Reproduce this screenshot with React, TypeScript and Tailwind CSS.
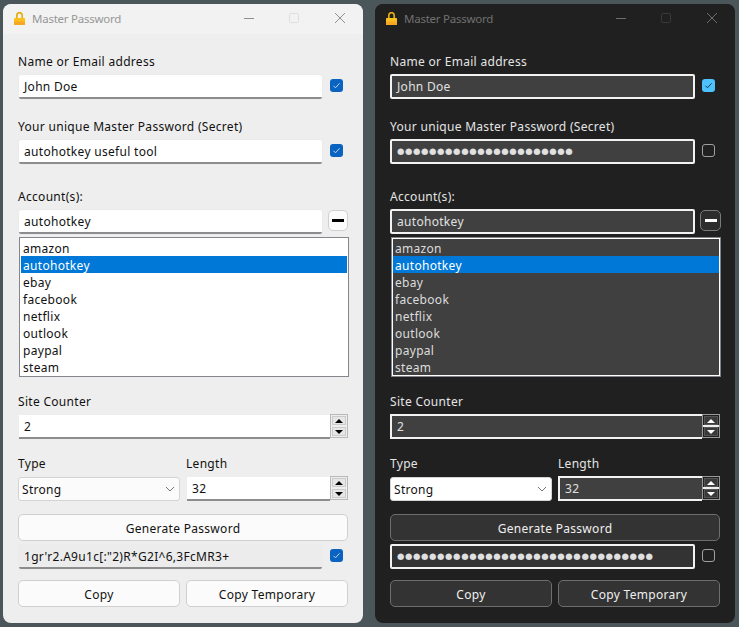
import React from "react";

type Theme = {
  win: string; bar: string; title: string; ctl: string; ctlBox: string; label: string; input: string; outInput: string;
  chkOn: string; tick: string; chkOff: string; minus: string; minusBar: string; list: string; item: string;
  combo: string; btn: string; spinOuter: string; spinBtn: string; spinSep: string; arrow: string; spinInput: string;
};

const light: Theme = {
  win: "bg-[#eeeeee]", bar: "bg-[#f2f2f2]", title: "text-[#969696]", ctl: "#8f8f8f", ctlBox: "#dedede", label: "text-[#111111]",
  input: "h-[24px] pl-[5px] bg-white text-[#111111] border-b-2 border-b-[#8d8d8d] rounded-[2px] shadow-[0_0_1px_#d8d8d8]",
  outInput: "h-[24px] pl-[5px] bg-[#ececec] text-[#111111] border-b-2 border-b-[#8d8d8d] rounded-[2px] shadow-[0_0_1px_#d8d8d8]",
  chkOn: "bg-[#0a63c0]", tick: "#bcd6f2", chkOff: "border border-[#999999]",
  minus: "ml-[6px] w-[20px] bg-[#fbfbfb] border border-[#d0d0d0]", minusBar: "bg-black",
  list: "bg-white border border-[#85858b] p-px", item: "text-[#111111]",
  combo: "bg-[#fbfbfb] text-[#111111] border border-[#d4d4d4]",
  btn: "bg-[#fbfbfb] text-[#111111] border border-[#cfcfcf]",
  spinOuter: "border border-[#b9b9b9] bg-[#eeeeee]", spinBtn: "bg-[#e6e6e6] border border-[#cbcbcb]", spinSep: "h-[2px]", arrow: "border-t-black border-b-black",
  spinInput: "ml-px pl-[5px] bg-white text-[#111111] border-b-2 border-b-[#8d8d8d]",
};

const dark: Theme = {
  win: "bg-[#202020]", bar: "bg-[#202020]", title: "text-[#707070]", ctl: "#6e6e6e", ctlBox: "#3a3a3a", label: "text-[#e4e4e4]",
  input: "h-[25px] -mt-px -mx-px pl-[5px] pb-[1px] bg-[#404040] text-[#e0e0e0] border-2 border-[#f2f2f2] rounded-[2px]",
  outInput: "h-[25px] -mt-px -mx-px pl-[5px] pb-[1px] bg-[#333333] text-[#e0e0e0] border-2 border-[#f2f2f2] rounded-[2px]",
  chkOn: "bg-[#4cc2ff]", tick: "#1b3a4a", chkOff: "border border-[#a0a0a0]",
  minus: "ml-[6px] -mr-px w-[21px] bg-[#2d2d2d] border border-[#7a7a7a]", minusBar: "bg-white",
  list: "bg-[#404040] border border-[#808488] outline outline-1 -outline-offset-2 outline-white p-px", item: "text-[#dcdcdc]",
  combo: "bg-white text-[#111111] border border-[#d4d4d4]",
  btn: "bg-[#333333] text-[#f0f0f0] border border-[#6e6e6e]",
  spinOuter: "border border-[#9a9a9a] bg-[#202020]", spinBtn: "bg-[#3a3a3a] border border-[#555555]", spinSep: "h-[2px] -mx-px bg-[#eeeeee]", arrow: "border-t-white border-b-white",
  spinInput: "-mt-px pl-[5px] bg-[#404040] text-[#e0e0e0] border-2 border-r-0 border-[#f2f2f2]",
};

const font = "font-['Noto_Sans',sans-serif] text-[12px] tracking-[0.3px] leading-[17px]";

function Lock() {
  return (
    <svg width="11" height="13" viewBox="0 0 11 13" className="shrink-0">
      <path d="M2.8 6.5V3.4a2.7 2.7 0 0 1 5.4 0v3.1" fill="none" stroke="#e3ab12" strokeWidth="1.7" />
      <rect x="0" y="6" width="11" height="7" rx="0.8" fill="#fcc01e" />
      <rect x="0" y="9.5" width="11" height="3.5" rx="0.8" fill="#f6a823" />
    </svg>
  );
}

function TitleBar({ t }: { t: Theme }) {
  return (
    <div className={`flex h-[30px] items-center rounded-t-lg pb-[2px] pl-[11px] ${t.bar}`}>
      <Lock />
      <span className={`ml-[7px] text-[11.5px] tracking-[-0.25px] ${t.title}`}>Master Password</span>
      <div className="ml-auto flex items-center">
        <svg width="10" height="10" viewBox="0 0 10 10" className="mr-[35px]"><path d="M0 5.5h10" stroke={t.ctl} strokeWidth="1" /></svg>
        <svg width="10" height="10" viewBox="0 0 10 10" className="mr-[36px]"><rect x="0.5" y="0.5" width="9" height="9" rx="1" fill="none" stroke={t.ctlBox} /></svg>
        <svg width="10" height="10" viewBox="0 0 10 10" className="mr-[18px]"><path d="M0 0l10 10M10 0L0 10" stroke={t.ctl} strokeWidth="1" /></svg>
      </div>
    </div>
  );
}

function Check({ t, on }: { t: Theme; on: boolean }) {
  return on ? (
    <span className={`flex h-[13px] w-[13px] items-center justify-center rounded-[3px] ${t.chkOn}`}>
      <svg width="9" height="9" viewBox="0 0 9 9"><path d="M1.5 4.8l2 2 4-4.5" fill="none" stroke={t.tick} strokeWidth="1" /></svg>
    </span>
  ) : (
    <span className={`block h-[13px] w-[13px] rounded-[3px] ${t.chkOff}`} />
  );
}

function Dots({ n }: { n: number }) {
  return <span className="font-['DejaVu_Sans',sans-serif] text-[8.5px] tracking-[0.6px]">{"●".repeat(n)}</span>;
}

function Field({ cls, children }: { cls: string; children: React.ReactNode }) {
  return <div className={`flex items-center overflow-hidden ${cls}`}>{children}</div>;
}

function FieldRow({ t, on, cls, children }: { t: Theme; on: boolean; cls?: string; children: React.ReactNode }) {
  return (
    <div className="flex items-start">
      <div className="ml-px min-w-0 flex-1"><Field cls={cls ?? t.input}>{children}</Field></div>
      <div className="ml-[8px] mr-[5px] w-[13px] shrink-0 pt-[4px]"><Check t={t} on={on} /></div>
    </div>
  );
}

function Spin({ t, value, lead }: { t: Theme; value: string; lead?: string }) {
  const b = "flex flex-1 items-center justify-center";
  return (
    <div className={`flex h-[24px] ${lead ?? ""}`}>
      <div className={`flex flex-1 items-center ${t.spinInput}`}>{value}</div>
      <div className={`-mt-px flex h-[24px] w-[18px] flex-col p-px ${t.spinOuter}`}>
        <div className={`${b} ${t.spinBtn}`}><span className={`h-0 w-0 border-x-[4px] border-b-[4px] border-x-transparent ${t.arrow}`} /></div>
        <div className={t.spinSep} />
        <div className={`${b} ${t.spinBtn}`}><span className={`h-0 w-0 border-x-[4px] border-t-[4px] border-x-transparent ${t.arrow}`} /></div>
      </div>
    </div>
  );
}

function Btn({ t, children, cls }: { t: Theme; children: React.ReactNode; cls: string }) {
  return <div className={`flex items-center justify-center rounded-[5px] pt-px ${t.btn} ${cls}`}>{children}</div>;
}

const accounts = ["amazon", "autohotkey", "ebay", "facebook", "netflix", "outlook", "paypal", "steam"];

function Window({ t, masked }: { t: Theme; masked: boolean }) {
  return (
    <div className={`h-[619px] w-[360px] overflow-hidden rounded-lg ${t.win} ${font}`}>
      <TitleBar t={t} />
      <div className={`flex flex-col px-[15px] pt-[19px] ${t.label}`}>
        <div className="h-[17px]">Name or Email address</div>
        <div className="mt-[5px]"><FieldRow t={t} on>John Doe</FieldRow></div>

        <div className="mt-[19px] h-[17px]">Your unique Master Password (Secret)</div>
        <div className="mt-[5px]">
          <FieldRow t={t} on={!masked}>{masked ? <Dots n={22} /> : "autohotkey useful tool"}</FieldRow>
        </div>

        <div className="mt-[24px] h-[17px]">Account(s):</div>
        <div className="mt-[5px] flex items-start">
          <div className="ml-px min-w-0 flex-1"><Field cls={t.input}>autohotkey</Field></div>
          <div className={`flex h-[21px] items-center justify-center rounded-[5px] ${t.minus}`}>
            <span className={`h-[3px] w-[12px] ${t.minusBar}`} />
          </div>
        </div>
        <div className={`-mr-px ml-px mt-[3px] h-[140px] overflow-hidden ${t.list}`}>
          {accounts.map((a) => (
            <div key={a} className={`h-[17px] pl-[2px] leading-[19px] ${a === "autohotkey" ? "bg-[#0078d7] text-white" : t.item}`}>{a}</div>
          ))}
        </div>

        <div className="mt-[16px] h-[17px]">Site Counter</div>
        <Spin t={t} value="2" lead="mt-[5px]" />

        <div className="mt-[16px] flex h-[17px]">
          <div className="w-[168px]">Type</div>
          <div>Length</div>
        </div>
        <div className="mt-[5px] flex gap-[6px]">
          <div className={`flex h-[24px] w-[162px] items-center justify-between rounded-[3px] pl-[3px] pr-[4px] ${t.combo}`}>
            Strong
            <svg width="10" height="6" viewBox="0 0 10 6"><path d="M1 1l4 4 4-4" fill="none" stroke="#777777" /></svg>
          </div>
          <div className="flex-1"><Spin t={t} value="32" /></div>
        </div>

        <Btn t={t} cls="mt-[13px] h-[27px]">Generate Password</Btn>
        <div className="mt-[4px]">
          <FieldRow t={t} on={!masked} cls={t.outInput}>{masked ? <Dots n={32} /> : "1gr'r2.A9u1c[:\"2)R*G2I^6,3FcMR3+"}</FieldRow>
        </div>
        <div className="mt-[11px] flex gap-[6px]">
          <Btn t={t} cls="h-[27px] flex-1">Copy</Btn>
          <Btn t={t} cls="h-[27px] flex-1">Copy Temporary</Btn>
        </div>
      </div>
    </div>
  );
}

export default function App() {
  return (
    <div className="flex h-[627px] w-[739px] gap-[12px] overflow-hidden bg-[#4b565a] pl-[3px] pt-[4px]">
      <Window t={light} masked={false} />
      <Window t={dark} masked />
    </div>
  );
}
